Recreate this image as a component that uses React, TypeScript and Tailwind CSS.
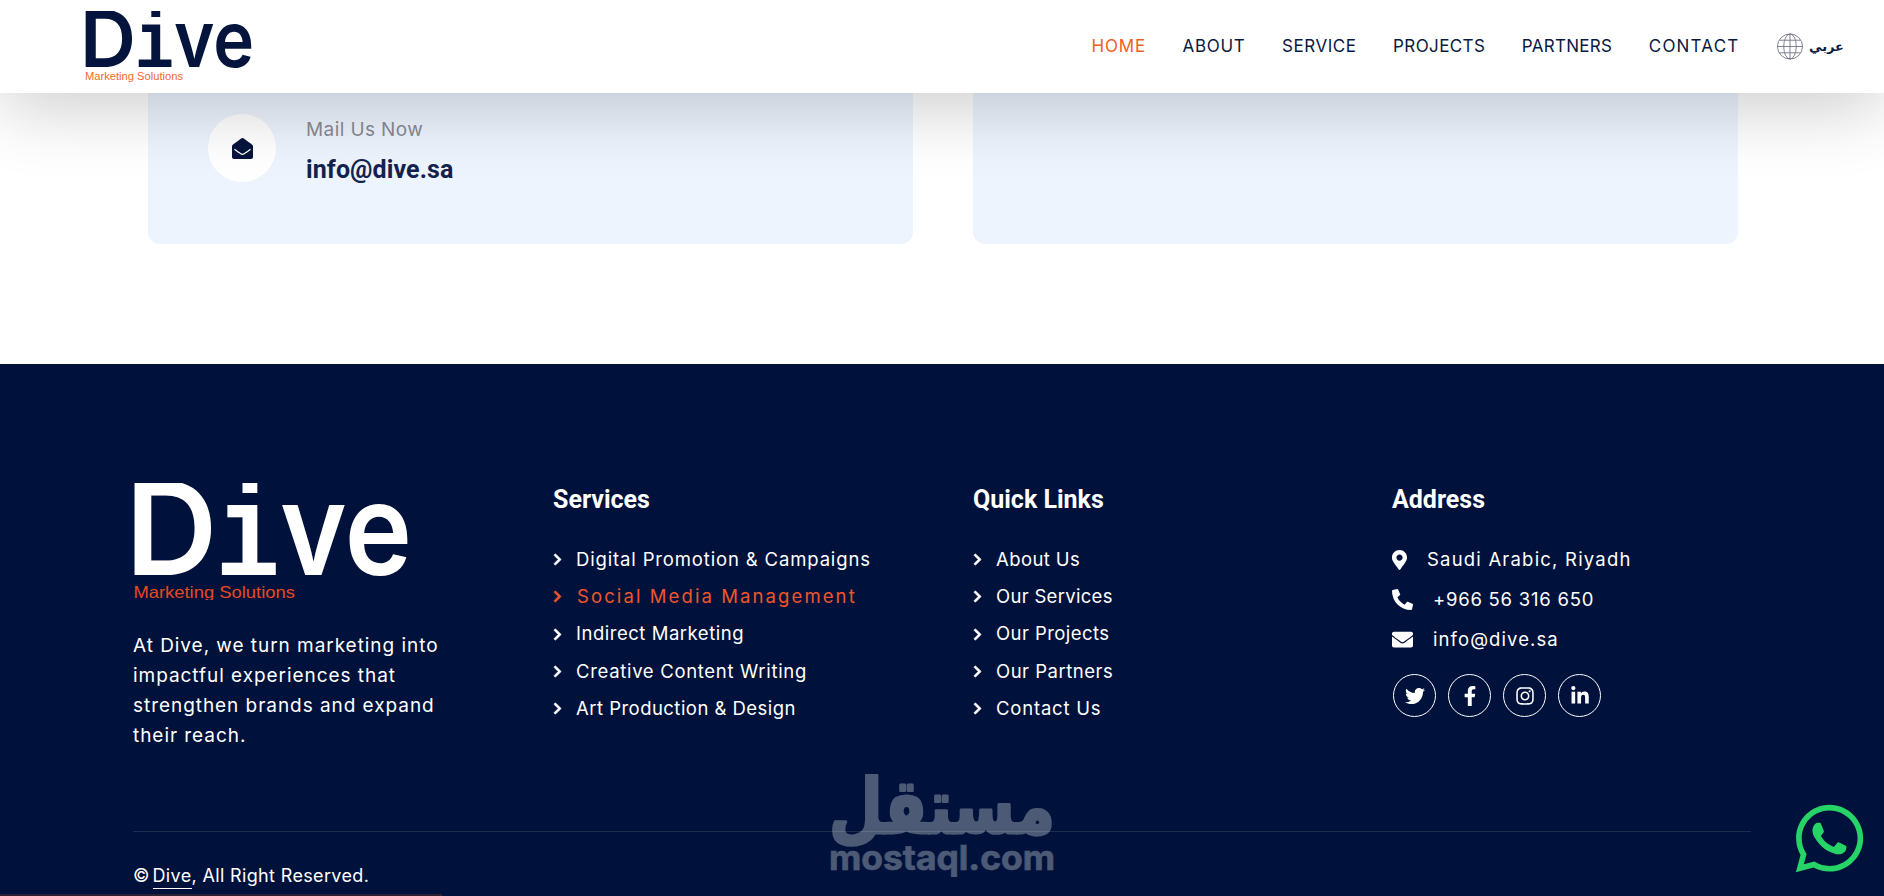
import {
  FaChevronRight,
  FaEnvelope,
  FaEnvelopeOpen,
  FaFacebookF,
  FaInstagram,
  FaLinkedinIn,
  FaMapMarkerAlt,
  FaPhoneAlt,
  FaTwitter,
  FaWhatsapp,
} from "react-icons/fa";
import { FC, ReactNode } from "react";

const Logo: FC<{ className: string; sub: string; subY: number }> = ({ className, sub, subY }) => (
  <svg viewBox="0 0 167 71" className={className} aria-label="Dive Marketing Solutions">
    <g fill="currentColor" fontFamily="Inter, sans-serif" fontWeight="600" fontSize="78">
      <text x="-5" y="56" textLength="56" lengthAdjust="spacingAndGlyphs">D</text>
      <text x="50" y="56" fontFamily="'Liberation Mono', monospace" fontWeight="700" fontSize="80" textLength="39" lengthAdjust="spacingAndGlyphs">i</text>
      <text x="89" y="56" textLength="80" lengthAdjust="spacingAndGlyphs">ve</text>
    </g>
    <text x="0" y={subY} fill={sub} fontFamily="'Liberation Sans', sans-serif" fontSize="10" textLength="98" lengthAdjust="spacingAndGlyphs">
      Marketing Solutions
    </text>
  </svg>
);

const Globe = () => (
  <svg viewBox="0 0 28 28" className="h-[27px] w-[28px] text-[#6d7285]" fill="none" stroke="currentColor" strokeWidth="0.9">
    <circle cx="14" cy="14" r="13" />
    <ellipse cx="14" cy="14" rx="6.5" ry="13" />
    <path d="M14 1v26M1 14h26M3 7.5h22M3 20.5h22" />
  </svg>
);

const Column: FC<{ title: string; children: ReactNode; className: string }> = ({ title, children, className }) => (
  <div className={className}>
    <h3 className="font-['Roboto',sans-serif] text-[25px] leading-[33px] font-bold text-white">{title}</h3>
    {children}
  </div>
);

const LinkRow: FC<{ label: string; track: string; active?: boolean }> = ({ label, track, active }) => (
  <li className={active ? "flex h-[37.25px] items-center text-[#f0562a]" : "flex h-[37.25px] items-center text-white"}>
    <FaChevronRight className={active ? "mr-[15px] h-[13px] w-[9px] shrink-0 stroke-[30]" : "mr-[14px] h-[13px] w-[9px] shrink-0 stroke-[30]"} />
    <span className={track}>{label}</span>
  </li>
);

const nav = [
  { t: "ABOUT", c: "tracking-[0.7px]" },
  { t: "SERVICE", c: "tracking-[0.55px]" },
  { t: "PROJECTS", c: "tracking-[0.4px]" },
  { t: "PARTNERS", c: "tracking-[0.3px]" },
  { t: "CONTACT", c: "tracking-[1.2px]" },
];
const services = [
  { t: "Digital Promotion & Campaigns", c: "tracking-[0.85px]" },
  { t: "Social Media Management", c: "tracking-[2.1px]" },
  { t: "Indirect Marketing", c: "tracking-[0.52px]" },
  { t: "Creative Content Writing", c: "tracking-[0.68px]" },
  { t: "Art Production & Design", c: "tracking-[0.47px]" },
];
const quick = [
  { t: "About Us", c: "tracking-[0.4px]" },
  { t: "Our Services", c: "tracking-[0.3px]" },
  { t: "Our Projects", c: "tracking-[0.43px]" },
  { t: "Our Partners", c: "tracking-[0.5px]" },
  { t: "Contact Us", c: "tracking-[0.8px]" },
];

export default function App() {
  return (
    <div className="relative h-[896px] w-[1884px] overflow-hidden bg-white font-['Inter',sans-serif]">
      <header className="relative z-10 flex h-[93px] items-center justify-between bg-white pr-[40px] pl-[85px] shadow-[0_15px_70px_rgba(0,0,0,0.2)]">
        <Logo className="h-[71px] w-[167px] text-[#04143c]" sub="#ef6a2c" subY={68.5} />
        <nav className="flex items-center gap-[36.5px] text-[17px] text-[#0b1a42]">
          <a className="tracking-[0.8px] text-[#ef5f22]">HOME</a>
          {nav.map((n) => (
            <a key={n.t} className={n.c}>{n.t}</a>
          ))}
          <div className="flex items-center gap-[5px]">
            <Globe />
            <span className="font-['DejaVu_Sans',sans-serif] text-[13px] font-bold">عربي</span>
          </div>
        </nav>
      </header>

      <section className="grid h-[271px] grid-cols-2 gap-x-[60px] pr-[146px] pb-[120px] pl-[148px]">
        <div className="flex rounded-b-xl bg-[#edf4fe] pt-[21px] pl-[60px]">
          <div className="flex h-[68px] w-[68px] shrink-0 items-center justify-center rounded-full bg-white">
            <FaEnvelopeOpen className="h-[21px] w-[21px] text-[#04143c]" />
          </div>
          <div className="ml-[30px]">
            <p className="mt-[2px] text-[19px] leading-[28px] tracking-[0.4px] text-[#8a8a92]">Mail Us Now</p>
            <p className="mt-[10px] font-['Roboto',sans-serif] text-[25px] leading-[32px] font-bold tracking-[0.1px] text-[#13234d]">info@dive.sa</p>
          </div>
        </div>
        <div className="rounded-b-xl bg-[#edf4fe]" />
      </section>

      <footer className="h-[532px] bg-[#00123b] px-[133px] pt-[119px] text-[18.5px] text-white">
        <div className="flex h-[268px]">
          <div className="w-[420px]">
            <Logo className="h-[117px] w-[276px] text-white" sub="#e8481f" subY={70} />
            <p className="mt-[31px] w-[320px] text-[19px] leading-[30px] tracking-[0.95px]">
              At Dive, we turn marketing into impactful experiences that strengthen brands and expand their reach.
            </p>
          </div>
          <Column title="Services" className="w-[420px]">
            <ul className="mt-[25px]">
              {services.map((s, i) => (
                <LinkRow key={s.t} label={s.t} track={s.c} active={i === 1} />
              ))}
            </ul>
          </Column>
          <Column title="Quick Links" className="w-[419px]">
            <ul className="mt-[25px]">
              {quick.map((s) => (
                <LinkRow key={s.t} label={s.t} track={s.c} />
              ))}
            </ul>
          </Column>
          <Column title="Address" className="flex-1">
            <div className="mt-[23.5px]">
              <div className="flex h-[40px] items-center">
                <FaMapMarkerAlt className="mr-[20px] h-[20px] w-[15px]" />
                <span className="tracking-[1.2px]">Saudi Arabic, Riyadh</span>
              </div>
              <div className="flex h-[40px] items-center">
                <FaPhoneAlt className="mr-[20px] h-[21px] w-[21px]" />
                <span className="tracking-[0.75px]">+966 56 316 650</span>
              </div>
              <div className="flex h-[40px] items-center">
                <FaEnvelope className="mr-[20px] h-[21px] w-[21px]" />
                <span className="tracking-[1.08px]">info@dive.sa</span>
              </div>
            </div>
            <div className="mt-[14.5px] ml-[1px] flex gap-[12px]">
              {[FaTwitter, FaFacebookF, FaInstagram, FaLinkedinIn].map((I, i) => (
                <a key={i} className="flex h-[43px] w-[43px] items-center justify-center rounded-full border border-white">
                  <I className="h-[20px] w-[20px]" />
                </a>
              ))}
            </div>
          </Column>
        </div>
        <div className="mt-[80px] border-t border-[#1c2c4d] pt-[29px] text-[18px] leading-[30px] tracking-[0.35px]">
          <span className="tracking-[-1px]">© </span>
          <span className="border-b border-white pb-[2px]">Dive</span>, All Right Reserved.
        </div>
      </footer>

      <svg viewBox="0 0 226 104" className="absolute top-[774px] left-[829px] h-[104px] w-[226px] text-white opacity-30" aria-label="مستقل mostaql.com">
        <text x="226" y="59" fill="currentColor" stroke="currentColor" strokeWidth="3" strokeLinejoin="round" fontFamily="'DejaVu Sans', sans-serif" fontWeight="700" fontSize="76" direction="rtl" textLength="226" lengthAdjust="spacingAndGlyphs">مستقل</text>
        <text x="0" y="96" fill="currentColor" stroke="currentColor" strokeWidth="0.6" fontFamily="Inter, sans-serif" fontWeight="700" fontSize="34" textLength="226" lengthAdjust="spacingAndGlyphs">mostaql.com</text>
      </svg>

      <FaWhatsapp className="absolute top-[800px] left-[1791px] h-[77px] w-[77px] text-[#25d366]" />
      <div className="absolute bottom-0 left-0 h-[2px] w-[442px] bg-[#2a2233]" />
    </div>
  );
}
